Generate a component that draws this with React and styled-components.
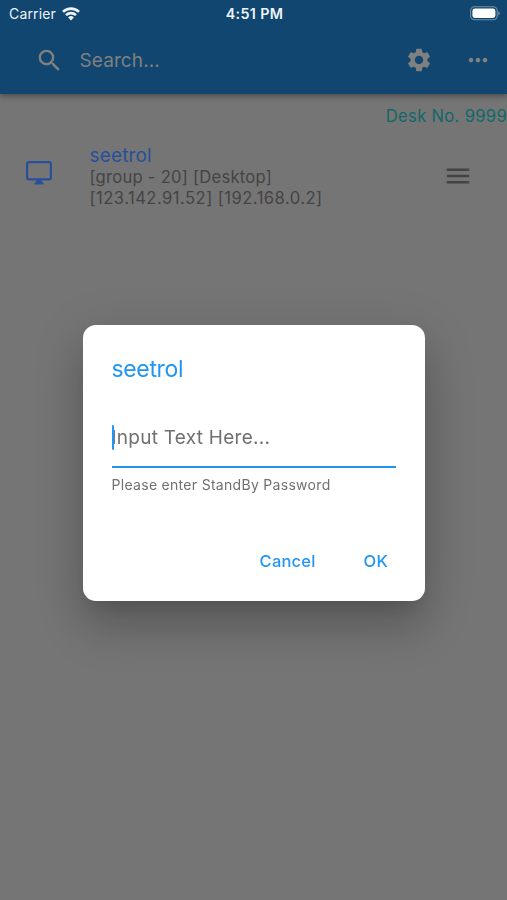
import React from "react";
import styled, { createGlobalStyle } from "styled-components";
import { MdSearch, MdSettings, MdMoreHoriz, MdMenu } from "react-icons/md";

const GlobalStyle = createGlobalStyle`
  * { box-sizing: border-box; }
  body { margin: 0; background: #757575; font-family: Inter, "Liberation Sans", sans-serif; }
`;

const Screen = styled.div`
  height: 900px;
  overflow: hidden;
  background: #757575;
`;

const AppBar = styled.header`
  height: 94px;
  background: #10466f;
  box-shadow: 0 2px 6px rgba(0, 0, 0, 0.38);
`;

const StatusBar = styled.div`
  height: 27px;
  padding: 0 7px 0 9px;
  display: grid;
  grid-template-columns: 1fr auto 1fr;
  align-items: center;
  color: #eef3f7;
`;

const Carrier = styled.div`
  display: flex;
  align-items: center;
  gap: 6px;
`;

const Battery = styled.div`
  display: flex;
  justify-content: flex-end;
`;

const Toolbar = styled.div`
  height: 66px;
  padding: 0 15px 0 35px;
  display: flex;
  align-items: center;
  color: #808080;
`;

const SearchField = styled.div`
  flex: 1;
  display: flex;
  align-items: center;
  gap: 15.5px;
`;

const SearchText = styled.div`
  padding-top: 2px;
`;

const Actions = styled.div`
  display: flex;
  align-items: center;
  gap: 31px;
  color: #808080;
`;

const Label = styled.span`
  display: block;
  white-space: nowrap;
  font-size: ${(p) => p.$size}px;
  line-height: ${(p) => p.$line || 20}px;
  letter-spacing: ${(p) => p.$track || 0}px;
  font-weight: ${(p) => p.$weight || 400};
  color: ${(p) => p.$color || "inherit"};
`;

const DeskRow = styled.div`
  height: 43px;
  padding-top: 12px;
  display: flex;
  justify-content: flex-end;
`;

const DeviceRow = styled.div`
  display: flex;
  align-items: center;
  height: 78px;
  padding: 0 34px 0 26px;
`;

const DeviceIcon = styled.div`
  display: flex;
  padding-bottom: 7px;
`;

const DeviceInfo = styled.div`
  flex: 1;
  margin-left: 37.5px;
  padding-top: 2px;
`;

const Overlay = styled.div`
  position: fixed;
  inset: 0;
  display: flex;
  justify-content: center;
  align-items: flex-start;
  padding-top: 324.5px;
`;

const Dialog = styled.section`
  width: 342px;
  height: 276px;
  padding: 29px 29px 25px;
  border-radius: 13px;
  background: #fff;
  display: flex;
  flex-direction: column;
  box-shadow: 0 13px 18px -8px rgba(0, 0, 0, 0.12), 0 28px 45px 2px rgba(0, 0, 0, 0.16),
    0 11px 50px 6px rgba(0, 0, 0, 0.1);
`;

const TextField = styled.div`
  height: 58px;
  margin-top: 26px;
  padding-top: 15px;
  border-bottom: 2.4px solid #2196e8;
  position: relative;
`;

const Caret = styled.i`
  position: absolute;
  left: 0;
  top: 15px;
  width: 2.5px;
  height: 25px;
  border-radius: 1px;
  background: #2196f3;
`;

const Buttons = styled.div`
  margin-top: auto;
  padding-right: 7.5px;
  display: flex;
  justify-content: flex-end;
  gap: 48px;
`;

function WifiIcon() {
  return (
    <svg width="18" height="14" viewBox="0 0 18 14" fill="none" stroke="currentColor" strokeWidth="2.6">
      <path d="M1 4.9a11.4 11.4 0 0 1 16 0" />
      <path d="M4 8.2a7.1 7.1 0 0 1 10 0" />
      <path d="M6.1 10.4a4.1 4.1 0 0 1 5.8 0L9 13.4z" fill="currentColor" stroke="none" />
    </svg>
  );
}

function BatteryIcon() {
  return (
    <svg width="30" height="15" viewBox="0 0 30 15">
      <rect x="0.6" y="0.8" width="26.6" height="13" rx="4" fill="none" stroke="#7291ab" strokeWidth="1.1" />
      <rect x="2.4" y="2.6" width="23" height="9.4" rx="2.4" fill="#fff" />
      <path d="M28.3 5.2c1.9.7 1.9 3.5 0 4.2z" fill="#7291ab" />
    </svg>
  );
}

function MonitorIcon() {
  return (
    <svg width="26" height="24" viewBox="0 0 26 24">
      <rect x="1.1" y="1.1" width="23.8" height="17.2" rx="1.8" fill="none" stroke="#28509a" strokeWidth="2.2" />
      <path d="M10.4 18.5h5.2v2l2 1.6v1.4H8.4v-1.4l2-1.6z" fill="#28509a" />
    </svg>
  );
}

export default function App() {
  return (
    <Screen>
      <GlobalStyle />
      <AppBar>
        <StatusBar>
          <Carrier>
            <Label $size={14} $track={0.15}>Carrier</Label>
            <WifiIcon />
          </Carrier>
          <Label $size={14.3} $weight={600} $track={0.35}>4:51 PM</Label>
          <Battery><BatteryIcon /></Battery>
        </StatusBar>
        <Toolbar>
          <SearchField>
            <MdSearch size={29} />
            <SearchText>
              <Label $size={19} $line={26} $track={0.1}>Search...</Label>
            </SearchText>
          </SearchField>
          <Actions>
            <MdSettings size={28} />
            <MdMoreHoriz size={28} />
          </Actions>
        </Toolbar>
      </AppBar>
      <DeskRow>
        <Label $size={16.6} $color="#11686a" $track={0.3}>Desk No. 9999</Label>
      </DeskRow>
      <DeviceRow>
        <DeviceIcon><MonitorIcon /></DeviceIcon>
        <DeviceInfo>
          <Label $size={19} $line={22} $color="#28509a" $track={0.15}>seetrol</Label>
          <Label $size={16.6} $line={21} $color="#444" $track={0.25}>[group - 20] [Desktop]</Label>
          <Label $size={16.6} $line={21} $color="#444" $track={0.46}>[123.142.91.52] [192.168.0.2]</Label>
        </DeviceInfo>
        <MdMenu size={30} color="#444" />
      </DeviceRow>
      <Overlay>
        <Dialog>
          <Label $size={23} $line={30} $color="#2196f3" $track={-0.35}>seetrol</Label>
          <TextField>
            <Label $size={19} $line={26} $color="#707070" $track={0.26}>Input Text Here...</Label>
            <Caret />
          </TextField>
          <Label $size={14} $line={34} $color="#707070" $track={0.3}>Please enter StandBy Password</Label>
          <Buttons>
            <Label $size={16.5} $line={30} $weight={500} $color="#2196f3" $track={0.2}>Cancel</Label>
            <Label $size={16.5} $line={30} $weight={500} $color="#2196f3" $track={0.2}>OK</Label>
          </Buttons>
        </Dialog>
      </Overlay>
    </Screen>
  );
}
